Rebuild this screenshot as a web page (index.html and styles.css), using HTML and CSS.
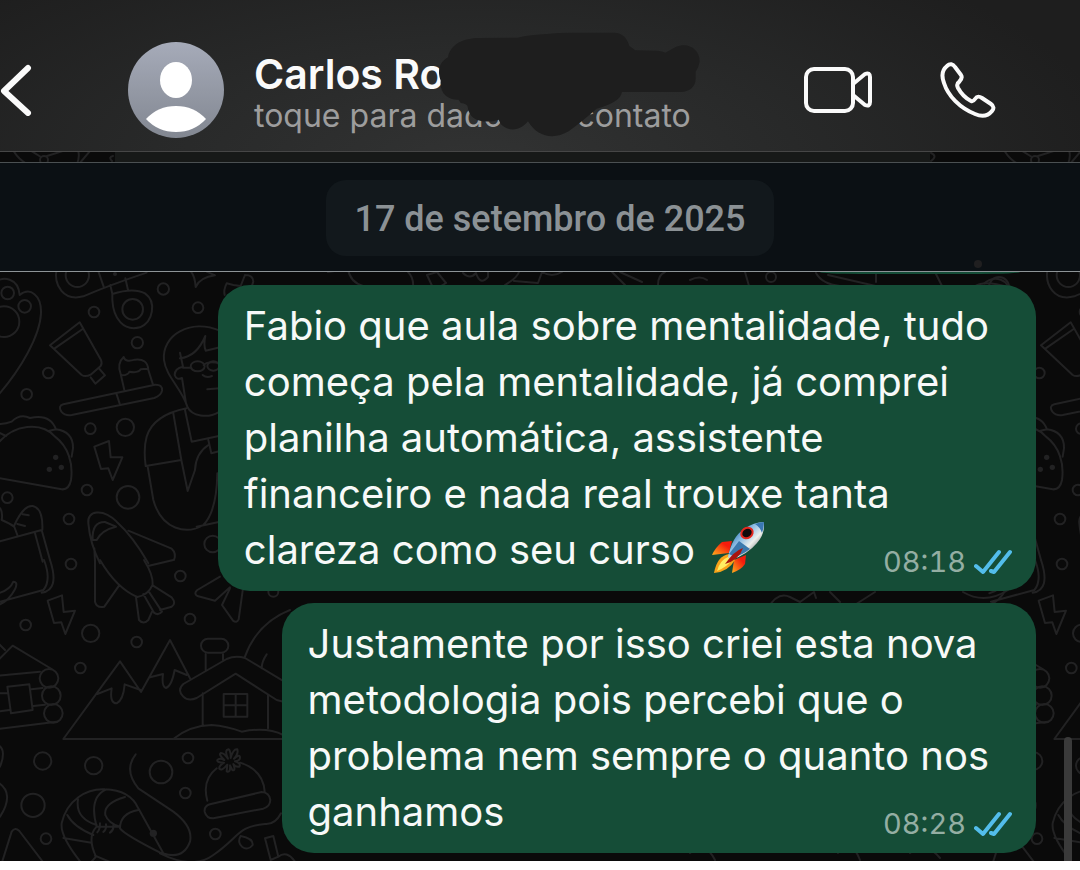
FILE: index.html
```
<!DOCTYPE html>
<html lang="pt-BR">
   <head>
      <meta charset="UTF-8">
      <meta name="viewport" content="width=device-width, initial-scale=1.0">
      <title>Conversa</title>
      <link rel="stylesheet" href="styles.css">
   </head>
   <body>
      <header class="topbar">
         <button class="icon-btn back" aria-label="Voltar">
            <svg width="32" height="52" viewBox="0 0 32 52"><path d="M28 4 L4 27 L28 49"/></svg>
         </button>
         <svg class="avatar" viewBox="0 0 96 96" aria-hidden="true">
            <defs>
               <linearGradient id="avatar_bg" x1="0" y1="0" x2="0" y2="1">
                  <stop offset="0" stop-color="#a6abb9"/>
                  <stop offset="1" stop-color="#828791"/>
               </linearGradient>
            </defs>
            <circle cx="48" cy="48" r="48" fill="url(#avatar_bg)"/>
            <ellipse cx="48" cy="38" rx="16" ry="18" fill="#fff"/>
            <path d="M18 77 Q30 64 48 64 Q66 64 78 77 Q66 90 48 90 Q30 90 18 77Z" fill="#fff"/>
         </svg>
         <div class="contact">
            <h1>Carlos Ro</h1>
            <p>toque para dados do contato</p>
            <svg class="scribble" viewBox="232 96 789 318" aria-hidden="true">
               <path d="M262 172 C270 130 310 115 355 114 L470 113 Q510 104 560 102 Q590 98 640 98 L760 98 C785 98 800 115 806 138 L824 151 L890 152 Q906 153 914 158 L945 141 C980 125 1017 145 1017 185 Q1014 202 1005 215 L1005 235 C1005 262 985 276 960 276 L784 276 C780 300 750 314 708 326 C680 350 650 375 624 394 C580 420 530 412 502 364 C486 385 450 402 420 372 L414 359 C375 372 325 365 321 320 Q321 312 300 309 L294 299 C262 300 236 280 240 242 C228 210 238 185 262 172Z"/>
            </svg>
         </div>
         <nav class="calls">
            <button class="icon-btn" aria-label="Chamada de vídeo">
               <svg width="70" height="46" viewBox="0 0 70 46"><rect x="2" y="2" width="47" height="42" rx="8"/><path d="M49 17 L61 7 Q66 5 66 10 V35 Q66 40 61 38 L49 28"/></svg>
            </button>
            <button class="icon-btn" aria-label="Chamada de voz">
               <svg width="56" height="56" viewBox="0 0 56 56"><path d="M7 4 C10 1 13 2 15 5 L21 13 C23 16 21 18 19 20 Q16 22 18 26 Q23 35 31 39 Q33 40 35 37 C37 34 39 34 42 36 L51 42 C54 44 54 47 52 49 C48 54 42 55 35 52 C20 46 8 34 4 21 C1 13 2 8 7 4Z"/></svg>
            </button>
         </nav>
      </header>
      <main class="chat">
         <svg class="wallpaper" aria-hidden="true">
            <defs>
               <g id="doodles">
                  <!-- upper half -->
                  <g transform="translate(0 108) scale(.33333)">
                     <circle cx="23" cy="99" r="19"/><circle cx="74" cy="139" r="19"/><circle cx="12" cy="185" r="46"/>
                     <path d="M-20 70 C10 45 55 55 59 105 C90 80 125 105 123 160 C120 230 60 330 -5 405"/>
                     <circle cx="232" cy="46" r="35"/><circle cx="398" cy="148" r="31"/>
                     <path d="M170 25 C160 75 190 125 250 109 Q330 75 440 38 M292 25 L311 80 M331 75 L337 102 Q400 82 435 100 C470 125 460 185 420 202 C370 215 340 175 337 120 V102 M376 55 L384 90"/>
                     <circle cx="345" cy="42" r="3"/>
                     <path d="M573 35 Q585 50 587 81 Q600 52 645 46 L620 35"/>
                     <path d="M735 45 Q760 45 760 65 L750 95 M700 75 L680 70 Q670 90 674 105 M735 45 L722 78 L700 75"/>
                     <circle cx="490" cy="87" r="17"/><circle cx="282" cy="156" r="16"/><circle cx="594" cy="143" r="16"/><circle cx="412" cy="248" r="17"/><circle cx="145" cy="339" r="16"/><circle cx="80" cy="403" r="16"/>
                     <path d="M239 187 L150 256 L245 345 Q256 352 272 344 L302 318 Q307 310 303 300Z M163 266 L248 207 M272 352 L286 371 L315 346 L297 325"/>
                     <path d="M373 390 L362 342 Q350 310 371 291 Q375 308 405 299 Q443 295 445 330 L459 374 M366 346 Q385 345 388 335 Q415 340 422 328 L442 326"/>
                     <path d="M190 433 L465 374 Q488 373 486 392 Q484 406 463 414 L215 465 Q195 468 184 455 Q173 438 190 433Z M349 400 L359 431"/>
                     <path d="M660 212 C570 175 485 225 492 300 C498 350 545 385 562 440 C575 470 625 475 655 457 M540 278 L549 320 Q524 325 524 345 Q530 362 546 354 L558 430 M540 295 Q590 290 616 228 Q610 255 617 272 L660 262 M549 323 L574 323 M611 315 Q625 302 660 310"/>
                     <ellipse cx="593" cy="319" rx="21" ry="15"/><ellipse cx="640" cy="318" rx="18" ry="14"/>
                     <path d="M608 345 Q620 355 636 348 M622 388 L660 385"/>
                     <path d="M560 445 Q460 465 440 530 Q430 565 437 618 L544 600 M443 620 L460 720 C485 810 560 825 610 795 Q650 755 652 640 M520 460 L544 600 L563 693 L585 630 Q587 580 625 555 M555 450 L575 545 L660 527 M625 540 L634 580 L660 573 M590 800 L660 785"/>
                     <path d="M-15 490 Q10 495 35 485 Q60 460 90 474 Q150 460 168 508 Q220 515 219 565 L215 590 M145 513 L168 508 M-10 555 C40 490 125 485 165 530 C205 560 220 610 213 660 Q207 690 185 688 L-5 654 M-10 515 L18 528"/>
                     <circle class="dot" cx="167" cy="592" r="8"/><circle class="dot" cx="148" cy="628" r="8"/><circle class="dot" cx="184" cy="622" r="8"/>
                     <circle cx="271" cy="506" r="16"/><circle cx="376" cy="502" r="26"/><circle cx="261" cy="690" r="16"/><circle cx="384" cy="712" r="34"/><circle cx="22" cy="713" r="16"/><circle cx="207" cy="777" r="16"/><circle cx="638" cy="852" r="25"/>
                     <path d="M283 560 L327 543 L332 592 L367 592 L338 660 L325 625 L303 627Z"/>
                     <path d="M52 825 L42 798 Q70 735 98 738 Q130 745 127 810 M68 763 L86 766 M52 792 L75 798 M-5 740 Q10 750 5 780 Q30 790 42 800 M0 844 L125 810 L150 900 M105 820 L128 905"/>
                     <path d="M265 790 C260 750 310 745 350 785 Q400 830 445 910 M265 790 Q270 850 300 910 M278 840 Q275 785 315 786 L348 800 Q305 810 290 840Z M385 812 L515 866 Q530 880 522 900 M283 865 L285 905"/>
                  </g>
                  <!-- lower half -->
                  <g transform="translate(0 408) scale(.33333)">
                     <path d="M132 0 Q155 60 130 90 L0 125 M150 0 Q180 90 125 98 M-5 100 Q30 90 40 65 Q55 65 45 88 Q25 125 -5 135"/>
                     <path d="M285 0 V125 Q290 145 313 140 L357 77 M300 0 Q350 85 412 111 Q445 105 458 74 Q460 45 432 0 M408 112 L417 180 Q430 195 445 180 L456 155 M458 76 L515 112 Q530 130 515 140 L480 150 M430 102 L462 158 Q475 168 486 155 L448 97 M444 18 L520 0"/>
                     <path d="M660 50 L592 90 Q580 100 592 108 L645 122 L690 82 M690 85 L666 135 L699 182 Q710 190 716 178 L728 92"/>
                     <circle cx="213" cy="12" r="16"/><circle cx="541" cy="48" r="16"/><circle cx="570" cy="177" r="16"/><circle cx="77" cy="195" r="16"/><circle cx="272" cy="220" r="26"/><circle cx="410" cy="246" r="16"/><circle cx="241" cy="324" r="16"/><circle cx="820" cy="95" r="15"/>
                     <path d="M143 122 L186 106 L191 156 L225 152 L196 222 L184 187 L162 189Z"/>
                     <path d="M-5 300 L38 257 L155 327 M-5 347 L120 335 M0 400 H22 M0 454 L28 450 M94 388 L128 384 M100 438 L135 434 M-5 507 L170 485 M22 380 L88 373 L98 450 L33 460Z M-5 250 L15 270"/>
                     <circle cx="147" cy="355" r="28"/><circle cx="154" cy="407" r="28"/><circle cx="160" cy="460" r="28"/>
                     <path d="M850 537 H190 L360 304 L423 396 L510 240 L570 355 M292 402 L335 385 Q328 430 350 430 Q370 420 374 373 L422 390 M450 352 L489 342 Q484 380 498 384 Q515 378 524 330 L560 345"/>
                     <path d="M608 495 V400 M804 405 V505 M848 362 L735 294 Q706 285 680 297 L550 372 Q530 390 550 410 Q565 425 590 414 L707 341 L830 420 L850 425 M617 330 V282 M669 300 V282 M523 535 Q570 497 635 495 Q680 498 725 515 Q800 500 850 525 M734 292 Q770 190 870 150 M785 325 Q785 305 800 283"/>
                     <rect x="603" y="236" width="82" height="42" rx="21"/><path d="M671 402 H742 V470 H671Z M707 402 V470 M671 436 H742"/>
                     <circle cx="128" cy="603" r="26"/><circle cx="281" cy="617" r="26"/><circle cx="483" cy="636" r="34"/><circle cx="564" cy="594" r="16"/><circle cx="556" cy="699" r="16"/><circle cx="99" cy="736" r="35"/><circle cx="138" cy="836" r="16"/><circle cx="646" cy="822" r="16"/>
                     <path d="M622 722 Q605 660 650 625 M720 608 Q790 630 794 695 M630 733 L785 696 Q808 697 811 720 Q810 740 790 746 L640 775 Q620 776 614 755 Q612 738 630 733Z"/>
                     <path d="M684 596 Q672 570 686 568 Q693 575 692 594 Q700 565 712 568 Q716 580 702 596 Q720 580 720 593 Q720 602 705 604 Q724 610 718 620 Q706 622 700 612 Q708 635 697 630 L690 616 Q692 640 680 634 L682 614 Q665 635 658 626 Q656 618 672 608 Q650 608 652 600 Q658 592 673 600 Q655 584 662 579 Q672 578 684 596Z"/>
                     <path d="M407 583 Q370 630 415 685 L520 755 Q580 800 570 845 Q550 900 490 880 L415 745 M245 910 Q180 830 185 790 C200 720 260 685 315 688 Q390 690 415 745 M360 805 Q360 760 415 750 M360 805 Q375 825 485 880 M316 765 Q310 730 375 711 M316 765 Q325 790 360 800 H290 Q265 710 320 688 M290 795 Q225 775 234 718 M280 825 Q220 800 202 765 M274 848 L190 834 M290 800 Q260 830 288 890 L270 910 M285 887 L340 910 M300 790 Q300 810 292 817 M318 793 Q320 808 310 816 M340 795 Q342 810 330 818 M480 880 Q580 930 640 885 C720 830 710 800 795 792 Q825 795 843 760 M722 828 C705 855 740 880 758 855 Q760 835 722 828 M795 835 L820 828 L835 890 L812 900Z M835 890 Q860 870 885 905"/>
                     <circle class="dot" cx="460" cy="820" r="11"/>
                     <path d="M5 910 L35 815 Q45 800 58 813 L132 910 M-5 555 Q20 570 0 620 M-5 668 Q45 700 0 770"/>
                  </g>
                  <!-- top strip -->
                  <path d="M13 -2 Q18 7 27 12 M41 5 L28 -3 M47 4 L66 -2 M78 -2 Q80 5 77 12 M90 -1 L79 12"/><circle cx="44" cy="8" r="4"/>
               </g>
            </defs>
            <use href="#doodles"/>
            <use href="#doodles" x="991"/>
            <g transform="translate(0 118)">
               <path d="M328 2 L348 -1 Q350 12 363 16 M408 2 Q414 8 413 17 M427 5 L437 2 L446 13 L434 20Z M463 3 Q470 10 476 3 Q480 16 488 7 V2 M505 15 Q517 8 519 2 M514 11 L538 13 L542 2 Q552 8 562 2 M612 2 L625 15 M620 2 L642 12 M658 15 Q658 5 665 2 M690 10 Q700 5 707 10 M745 2 L749 16 M816 3 Q822 14 840 16 M828 5 L880 17 M876 2 V12 M935 2 L942 16 M975 16 Q985 10 1008 17"/>
               <circle cx="771" cy="7" r="5"/><circle cx="999" cy="17" r="10"/>
               <path d="M768 338 Q778 321 790 327 L800 332 L814 322 L816 328 M830 322 L840 332 M875 322 L850 338 M963 322 Q985 335 1008 320 M690 583 Q705 570 715 590 M838 583 Q850 565 860 590 M910 583 Q925 570 940 588"/>
            </g>
            <path d="M112 9 Q108 5 113 4 M931 1 Q938 4 931 9"/>
         </svg>
         <div class="notice-edge"></div>
         <div class="date-band">
            <time class="date" datetime="2025-09-17">17 de setembro de 2025</time>
            <span class="speck"></span>
         </div>
         <div class="prev-bubble"></div>
         <section class="messages">
            <article class="bubble">
               <p>Fabio que aula sobre mentalidade, tudo<br>começa pela mentalidade, já comprei<br>planilha automática, assistente<br>financeiro e nada real trouxe tanta<br>clareza como seu curso
                  <svg class="rocket" viewBox="0 0 52 52" role="img" aria-label="foguete">
                     <defs>
                        <linearGradient id="hull" x1="0" y1="0" x2="1" y2="1">
                           <stop offset=".2" stop-color="#3379b8"/>
                           <stop offset=".4" stop-color="#8bbce3"/>
                           <stop offset=".6" stop-color="#eef0ec"/>
                           <stop offset=".85" stop-color="#5c6468"/>
                        </linearGradient>
                        <linearGradient id="fin" x1="1" y1="0" x2="0" y2="1">
                           <stop offset=".3" stop-color="#f51c0c"/>
                           <stop offset="1" stop-color="#ffb01c"/>
                        </linearGradient>
                     </defs>
                     <path d="M20 19 L10 20 Q3 26 0 33 L17 31Z" fill="url(#fin)"/>
                     <path d="M34 33 L33 42 Q29 48 20 51 L22 38Z" fill="url(#fin)"/>
                     <path d="M17 32 Q5 34 2 51 Q16 50 23 38Z" fill="#f9a31a"/>
                     <path d="M16 35 Q8 38 5 49 Q15 45 20 38Z" fill="#ffed63"/>
                     <path d="M16 35 Q20 15 32 7 Q42 0 52 0 Q53 12 45 21 Q36 32 19 38Z" fill="url(#hull)"/>
                     <path d="M43 2 Q48 0 52 0 Q52 6 50 11 Q48 5 43 2Z" fill="#3a78b4"/>
                     <path d="M27 19 L38 27 Q30 33 23 35 L17 32Z" fill="#3c79ad"/>
                     <path d="M31 26 Q22 29 13 42 Q27 38 31 26Z" fill="#a9140d"/>
                     <ellipse cx="35" cy="11" rx="7" ry="6" fill="#e5281f" transform="rotate(-35 35 11)"/>
                     <ellipse cx="35" cy="11" rx="5" ry="4" fill="#120a0c" transform="rotate(-35 35 11)"/>
                  </svg></p>
               <div class="meta">
                  <time>08:18</time>
                  <svg class="ticks" viewBox="0 0 38 26" role="img" aria-label="lida"><path d="M2 17 L9 23 L25 3 M17 22 L20 23 L36 3"/></svg>
               </div>
            </article>
            <article class="bubble">
               <p>Justamente por isso criei esta nova<br>metodologia pois percebi que o<br>problema nem sempre o quanto nos<br>ganhamos</p>
               <div class="meta">
                  <time>08:28</time>
                  <svg class="ticks" viewBox="0 0 38 26" role="img" aria-label="lida"><path d="M2 17 L9 23 L25 3 M17 22 L20 23 L36 3"/></svg>
               </div>
            </article>
         </section>
         <div class="scrollbar"></div>
      </main>
   </body>
</html>
```
FILE: styles.css
```
* {
   box-sizing: border-box;
}
body {
   margin: 0;
   background: #fff;
   font-family: Inter, "Liberation Sans", sans-serif;
}
h1, p {
   margin: 0;
}
.topbar {
   display: flex;
   align-items: center;
   padding: 42px 84px 13px 0;
   border-bottom: 1px solid #464646;
   background: radial-gradient(ellipse 60% 170% at 44% 110%, #323333, #282929 50%, #1e1e1e);
}
.icon-btn {
   display: flex;
   padding: 0;
   border: 0;
   background: none;
   cursor: pointer;
}
.icon-btn svg {
   fill: none;
   stroke: #fafafa;
   stroke-width: 4;
   stroke-linecap: round;
   stroke-linejoin: round;
}
.back {
   margin-right: 96px;
}
.back svg {
   stroke-width: 6;
}
.avatar {
   width: 96px;
   height: 96px;
   margin-right: 30px;
}
.contact {
   position: relative;
   flex: 1;
   padding-top: 2px;
   white-space: nowrap;
}
.contact h1 {
   font-size: 41px;
   font-weight: 600;
   line-height: 50px;
   color: #fafafa;
}
.contact p {
   font-size: 32px;
   line-height: 34px;
   color: #9d9d9d;
}
.scribble {
   position: absolute;
   left: 184px;
   top: -15px;
   width: 263px;
   height: 106px;
   fill: #1e1e1e;
}
.calls {
   display: flex;
   align-items: center;
   gap: 66px;
}
.chat {
   position: relative;
   overflow: hidden;
   background: #0a0a0a;
}
.wallpaper {
   position: absolute;
   inset: 0;
   width: 100%;
   height: 100%;
   fill: none;
   stroke: #222223;
   stroke-width: 2;
   stroke-linecap: round;
   stroke-linejoin: round;
}
.wallpaper [transform*="scale"] {
   stroke-width: 6;
}
.wallpaper .dot {
   fill: #222223;
   stroke: none;
}
.notice-edge {
   position: relative;
   height: 10px;
   margin: 0 150px 0 115px;
   background: #171918;
}
.date-band {
   position: relative;
   display: flex;
   justify-content: center;
   padding: 17px 0 15px 20px;
   border-top: 1px solid #4b5052;
   border-bottom: 1px solid #8d9396;
   background: #0b1014;
}
.date {
   padding: 15px 28px 13px;
   border-radius: 20px;
   background: #12181c;
   font-family: Roboto, sans-serif;
   font-size: 36px;
   font-weight: 500;
   line-height: 48px;
   color: #8b9195;
}
.speck {
   position: absolute;
   right: 98px;
   bottom: 3px;
   width: 8px;
   height: 8px;
   border-radius: 50%;
   background: #201f20;
}
.prev-bubble {
   position: relative;
   width: 200px;
   height: 2px;
   margin: 0 60px 0 auto;
   border-radius: 0 0 40px 40px / 0 0 2px 2px;
   background: #154d37;
}
.messages {
   position: relative;
   display: flex;
   flex-direction: column;
   align-items: flex-end;
   gap: 12px;
   padding: 11px 44px 8px;
}
.bubble {
   display: grid;
   padding: 13px 47px 13px 26px;
   border-radius: 32px;
   background: #154d37;
}
.bubble p {
   grid-area: 1 / 1;
   font-size: 40px;
   line-height: 56px;
   color: #f7f9f8;
}
.rocket {
   width: 52px;
   height: 52px;
   margin: -12px 0 -12px 6px;
   vertical-align: 2px;
}
.meta {
   grid-area: 1 / 1;
   align-self: end;
   justify-self: end;
   display: flex;
   align-items: center;
   gap: 8px;
   margin-right: -23px;
   font-size: 29px;
   font-variant-numeric: tabular-nums;
   line-height: 32px;
   color: #94aea3;
}
.ticks {
   width: 38px;
   height: 26px;
   fill: none;
   stroke: #53bdeb;
   stroke-width: 4;
   stroke-linecap: round;
   stroke-linejoin: round;
}
.scrollbar {
   position: absolute;
   right: 8px;
   bottom: 0;
   width: 8px;
   height: 124px;
   border-radius: 4px 4px 0 0;
   background: #3a3a3a;
}
```
